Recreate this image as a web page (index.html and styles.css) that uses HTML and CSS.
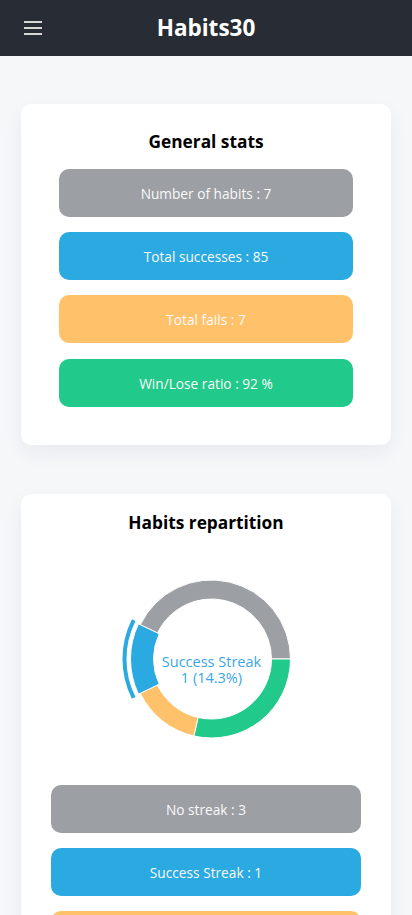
FILE: index.html
```html
<!DOCTYPE html>
<html lang="en">
<head>
<meta charset="utf-8">
<meta name="viewport" content="width=device-width, initial-scale=1">
<title>Habits30</title>
<link rel="stylesheet" href="styles.css">
</head>
<body>
<header class="topbar">
  <button class="menu-btn" aria-label="menu">
    <span class="bar"></span><span class="bar"></span><span class="bar"></span>
  </button>
  <h1 class="brand">Habits30</h1>
</header>
<main class="content">
  <section class="card card-stats">
    <h2 class="card-title">General stats</h2>
    <div class="stat-list">
      <div class="stat stat-gray">Number of habits : 7</div>
      <div class="stat stat-blue">Total successes : 85</div>
      <div class="stat stat-orange">Total fails : 7</div>
      <div class="stat stat-green">Win/Lose ratio : 92 %</div>
    </div>
  </section>
  <section class="card card-repartition">
    <h2 class="card-title">Habits repartition</h2>
    <div class="chart-wrap">
      <svg class="donut" width="200" height="200" viewBox="0 0 200 200">
        <path d="M34.31 64.74 A79 79 0 0 1 184.5 99 L165.5 99 A60 60 0 0 0 51.43 72.98 Z" fill="#9c9fa4" stroke="#fff" stroke-width="1"/>
        <path d="M184.5 99 A79 79 0 0 1 87.86 176.01 L92.10 157.49 A60 60 0 0 0 165.5 99 Z" fill="#21c98b" stroke="#fff" stroke-width="1"/>
        <path d="M87.86 176.01 A79 79 0 0 1 34.31 133.26 L51.43 125.02 A60 60 0 0 0 92.10 157.49 Z" fill="#ffc26b" stroke="#fff" stroke-width="1"/>
        <path d="M32.51 134.13 A81 81 0 0 1 32.51 63.87 L53.24 73.85 A58 58 0 0 0 53.24 124.15 Z" fill="#2ba9e1" stroke="#fff" stroke-width="1"/>
        <path d="M27.7 137.96 A87 87 0 0 1 27.7 60.04" fill="none" stroke="#2ba9e1" stroke-width="4"/>
        <text class="donut-label" x="105.5" y="107" text-anchor="middle">Success Streak</text>
        <text class="donut-label" x="105.5" y="123" text-anchor="middle">1 (14.3%)</text>
      </svg>
    </div>
    <div class="stat-list">
      <div class="stat stat-gray">No streak : 3</div>
      <div class="stat stat-blue">Success Streak : 1</div>
      <div class="stat stat-orange">Fail Streak : 1</div>
      <div class="stat stat-green">Win Streak : 2</div>
    </div>
  </section>
</main>
</body>
</html>
```
FILE: styles.css
```css
* { box-sizing: border-box; }
html, body { margin: 0; padding: 0; }
body {
  background: #f6f7f9;
  font-family: "Open Sans", "Noto Sans", sans-serif;
  color: #000;
}
.topbar {
  height: 56px;
  background: #282c34;
  display: flex;
  align-items: center;
  justify-content: center;
  position: relative;
}
.menu-btn {
  position: absolute;
  left: 24px;
  top: 21px;
  width: 18px;
  height: 14px;
  padding: 0;
  border: 0;
  background: transparent;
  display: flex;
  flex-direction: column;
  justify-content: space-between;
}
.bar {
  display: block;
  height: 2px;
  width: 18px;
  background: #d6d6d6;
}
.brand {
  margin: 0;
  color: #fff;
  font-size: 22.5px;
  font-weight: 700;
  line-height: 30px;
  letter-spacing: 0;
}
.content {
  padding: 48px 21px;
  display: flex;
  flex-direction: column;
  gap: 49px;
}
.card {
  background: #fff;
  border-radius: 10px;
  box-shadow: 0 8px 20px rgba(30, 40, 70, 0.06);
}
.card-stats { padding: 26px 38px 38px; }
.card-repartition { padding: 17px 30px 38px; }
.card-title {
  margin: 0;
  text-align: center;
  font-size: 17.3px;
  font-weight: 700;
  line-height: 24px;
}
.card-stats .card-title { margin-bottom: 15px; }
.stat-list {
  display: flex;
  flex-direction: column;
  gap: 15px;
}
.card-stats .stat:last-child { margin-top: 1px; }
.stat {
  height: 48px;
  border-radius: 10px;
  display: flex;
  align-items: center;
  justify-content: center;
  color: #fafafa;
  font-size: 13.7px;
}
.stat-gray { background: #9c9fa4; }
.stat-blue { background: #2ba9e1; }
.stat-orange { background: #ffc26b; }
.stat-green { background: #21c98b; }
.chart-wrap {
  display: flex;
  justify-content: center;
  margin: 25px 0;
}
.donut { display: block; }
.donut-label {
  font-family: "Open Sans", "Noto Sans", sans-serif;
  font-size: 14.5px;
  fill: #3ba6e4;
}
```
